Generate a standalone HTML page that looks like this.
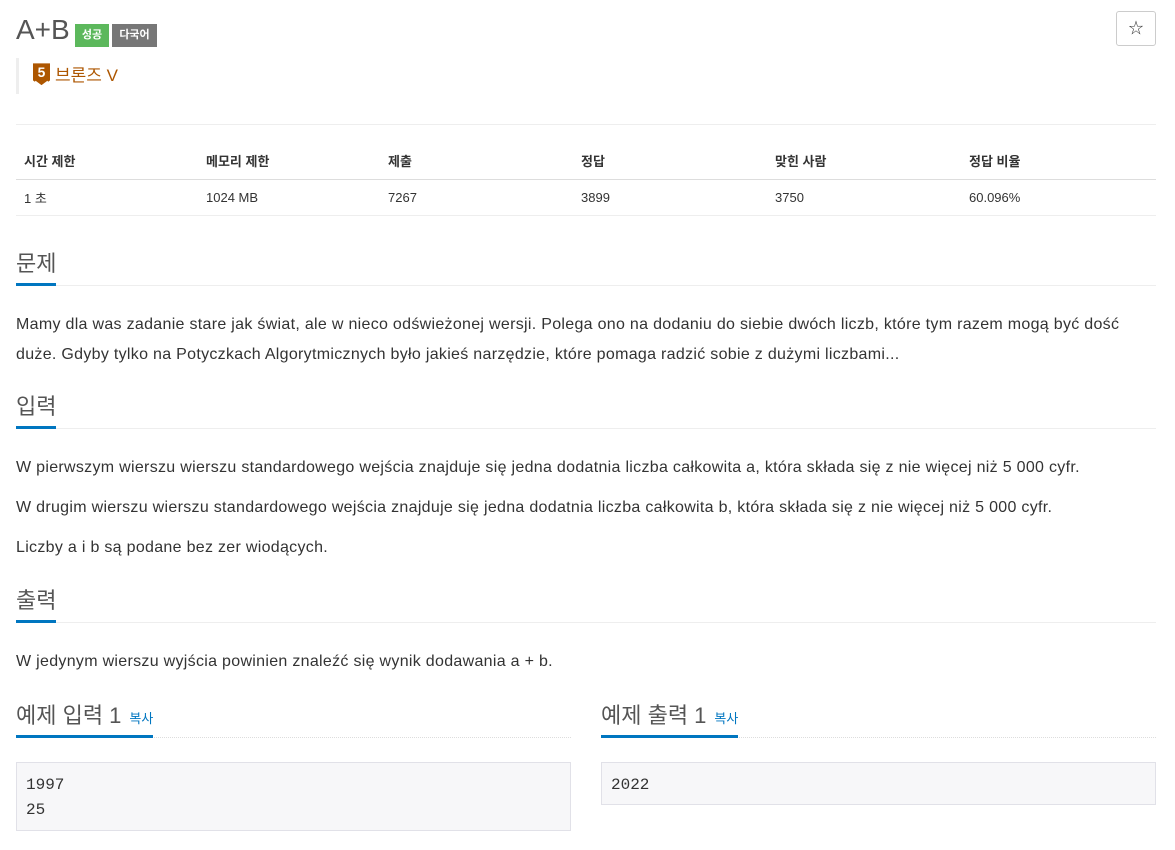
<!DOCTYPE html>
<html><head><meta charset="utf-8"><style>
*{box-sizing:border-box}
body{margin:0;background:#fff;font-family:"Liberation Sans","Noto Sans CJK KR",sans-serif;color:#333;width:1175px;height:850px;overflow:hidden;position:relative}
h1{position:absolute;left:16px;top:12px;margin:0;font-weight:normal;font-size:28px;color:#555;line-height:36px}
.lab{position:absolute;top:24px;height:23px;font-size:11px;font-weight:bold;color:#fff;line-height:23px;text-align:center}
.star{position:absolute;left:1116px;top:11px;width:40px;height:35px;border:1px solid #ccc;border-radius:3px;text-align:center;line-height:33px;font-size:15px;color:#333}
.tier{position:absolute;left:16px;top:58px;height:36px;border-left:3px solid #eee;padding-left:14px;line-height:36px;font-size:17px;color:#ad5600}
table{position:absolute;left:16px;top:124px;width:1140px;border-collapse:collapse;font-size:13px;border-top:1px solid #eee}
th{text-align:left;font-weight:bold;padding:26px 8px 0;height:55px;border-bottom:1px solid #ddd;vertical-align:top}
td{padding:8px;height:36px;border-bottom:1px solid #eee}
.hd{position:absolute;left:16px;width:1140px;height:38px;border-bottom:1px solid #eee}
.hd span{display:inline-block;font-size:22px;color:#555;height:38px;line-height:32px;border-bottom:3px solid #0076c0}
.hd small{font-size:13px;color:#0076c0;margin-left:8px}
p{position:absolute;left:16px;margin:0;font-size:16px;line-height:30px;width:1140px;color:#333;letter-spacing:0.3px}
pre{position:absolute;margin:0;background:#f7f7f9;border:1px solid #e1e1e8;font-family:"Liberation Mono",monospace;font-size:16px;line-height:25px;padding:10px 9px;color:#333}
</style></head><body>
<h1>A+B</h1>
<div class="lab" style="left:75px;width:34px;background:#5cb85c">성공</div>
<div class="lab" style="left:112px;width:45px;background:#777">다국어</div>
<div class="star">☆</div>
<div class="tier"><svg width="17" height="24" viewBox="0 0 16 22" style="vertical-align:-6px;margin-right:5px"><path d="M0 0H16V16L8 22L0 16Z" fill="#ad5600"/><path d="M2 17L8 21.5L14 17" stroke="#fff" stroke-width="1.5" fill="none"/><text x="8" y="13" font-size="13" font-weight="bold" fill="#fff" text-anchor="middle" font-family="Liberation Sans">5</text></svg>브론즈 V</div>
<table>
<tr><th style="width:182px">시간 제한</th><th style="width:182px">메모리 제한</th><th style="width:193px">제출</th><th style="width:194px">정답</th><th style="width:194px">맞힌 사람</th><th>정답 비율</th></tr>
<tr><td>1 초</td><td>1024 MB</td><td>7267</td><td>3899</td><td>3750</td><td>60.096%</td></tr>
</table>
<div class="hd" style="top:248px"><span>문제</span></div>
<p style="top:310px">Mamy dla was zadanie stare jak świat, ale w nieco odświeżonej wersji. Polega ono na dodaniu do siebie dwóch liczb, które tym razem mogą być dość duże. Gdyby tylko na Potyczkach Algorytmicznych było jakieś narzędzie, które pomaga radzić sobie z dużymi liczbami...</p>
<div class="hd" style="top:391px"><span>입력</span></div>
<p style="top:453px">W pierwszym wierszu wierszu standardowego wejścia znajduje się jedna dodatnia liczba całkowita a, która składa się z nie więcej niż 5 000 cyfr.</p>
<p style="top:493px">W drugim wierszu wierszu standardowego wejścia znajduje się jedna dodatnia liczba całkowita b, która składa się z nie więcej niż 5 000 cyfr.</p>
<p style="top:533px">Liczby a i b są podane bez zer wiodących.</p>
<div class="hd" style="top:585px"><span>출력</span></div>
<p style="top:647px">W jedynym wierszu wyjścia powinien znaleźć się wynik dodawania a + b.</p>
<div class="hd" style="top:700px;width:555px;border-bottom:1px dotted #ddd"><span>예제 입력 1<small>복사</small></span></div>
<div class="hd" style="top:700px;left:601px;width:555px;border-bottom:1px dotted #ddd"><span>예제 출력 1<small>복사</small></span></div>
<pre style="left:16px;top:762px;width:555px;height:69px">1997
25</pre>
<pre style="left:601px;top:762px;width:555px;height:43px">2022</pre>
</body></html>
